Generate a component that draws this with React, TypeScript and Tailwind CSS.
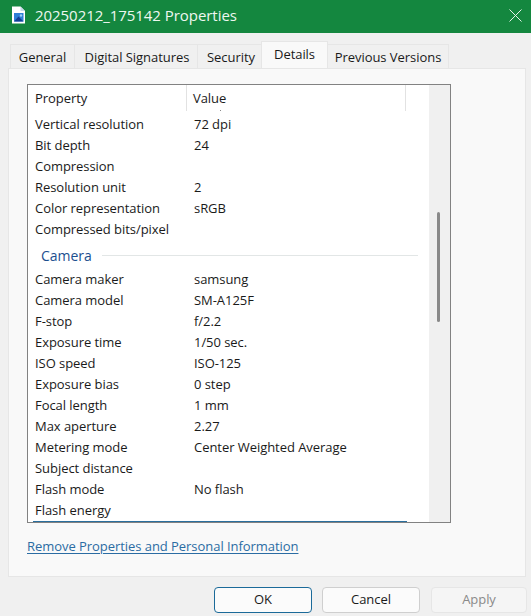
import React from 'react';

const imageRows = [
  { label: 'Vertical resolution', value: '72 dpi' },
  { label: 'Bit depth', value: '24' },
  { label: 'Compression', value: '' },
  { label: 'Resolution unit', value: '2' },
  { label: 'Color representation', value: 'sRGB' },
  { label: 'Compressed bits/pixel', value: '' },
];

const cameraRows = [
  { label: 'Camera maker', value: 'samsung' },
  { label: 'Camera model', value: 'SM-A125F' },
  { label: 'F-stop', value: 'f/2.2' },
  { label: 'Exposure time', value: '1/50 sec.' },
  { label: 'ISO speed', value: 'ISO-125' },
  { label: 'Exposure bias', value: '0 step' },
  { label: 'Focal length', value: '1 mm' },
  { label: 'Max aperture', value: '2.27' },
  { label: 'Metering mode', value: 'Center Weighted Average' },
  { label: 'Subject distance', value: '' },
  { label: 'Flash mode', value: 'No flash' },
  { label: 'Flash energy', value: '' },
];

const Row = ({ label, value }: { label: string; value: string }) => (
  <div className="flex h-[21px] shrink-0 items-center text-[#1a1a1a]">
    <span className="w-[166px] pl-[7px] whitespace-nowrap">{label}</span>
    <span className="whitespace-nowrap">{value}</span>
  </div>
);

const Tab = ({ label, width, inset = '' }: { label: string; width: string; inset?: string }) => (
  <div className={`${width} ${inset} -ml-px flex h-[24px] items-center justify-center border border-b-0 border-[#e6e6e6] bg-[#f0f0f0] pt-[2px] text-[#1a1a1a] whitespace-nowrap`}>
    {label}
  </div>
);

const FileIcon = () => (
  <svg width="15" height="18" viewBox="0 0 15 18">
    <path d="M1 0.5H9.5L14 5V17.5H1Z" fill="#ffffff" />
    <path d="M9.5 0.5V5H14Z" fill="#c8d8ea" />
    <rect x="3" y="7" width="9.5" height="8.5" fill="#2f7fd6" />
    <path d="M3 15.5L7.5 10.5L12.5 15.5Z" fill="#123f94" />
    <circle cx="10" cy="9.5" r="1.2" fill="#9fd0f5" />
  </svg>
);

export default function App() {
  return (
    <div className="flex h-[616px] w-[531px] flex-col overflow-hidden bg-[#f0f0f0] font-['Open_Sans','Noto_Sans',sans-serif] text-[13px] tracking-[-0.05px]">
      {/* Title bar */}
      <div className="flex h-[33px] shrink-0 items-center justify-between bg-[#14873f] pb-[3px] pl-[11px] pr-[9px] text-white">
        <div className="flex items-center gap-[9px]">
          <FileIcon />
          <span className="text-[15px] text-[#eef7f0]">20250212_175142 Properties</span>
        </div>
        <svg width="13" height="13" viewBox="0 0 13 13" stroke="#e4f2e8" strokeWidth="1">
          <path d="M0.5 0.5L12.5 12.5M12.5 0.5L0.5 12.5" />
        </svg>
      </div>

      {/* Tabs */}
      <div className="flex h-[35px] shrink-0 items-end pl-[11px]">
        <Tab label="General" width="w-[65px]" />
        <Tab label="Digital Signatures" width="w-[124px]" inset="pl-[2px]" />
        <Tab label="Security" width="w-[65px]" inset="pl-[3px]" />
        <div className="relative z-10 -ml-px flex h-[27px] w-[67px] items-start justify-center border border-b-0 border-[#e6e6e6] bg-[#f9f9f9] pt-[3px] text-[#1a1a1a]">
          Details
        </div>
        <Tab label="Previous Versions" width="w-[122px]" />
      </div>

      {/* Page */}
      <div className="ml-[8px] mr-[5px] flex h-[509px] shrink-0 flex-col border border-[#e6e6e6] bg-[#f9f9f9] pl-[18px] pr-[74px] pt-[15px]">
        <div className="flex h-[439px] shrink-0 border border-[#828282] bg-white">
          <div className="flex w-[401px] flex-col overflow-hidden">
            <div className="flex h-[25px] shrink-0 items-center text-[#1a1a1a]">
              <span className="w-[159px] border-r border-[#e2e2e2] pl-[7px] leading-[26px]">Property</span>
              <span className="w-[219px] border-r border-[#e2e2e2] pl-[6px] leading-[26px]">Value</span>
            </div>
            <div className="h-[4px] shrink-0">
              <div className="ml-[192px] h-px w-px bg-[#888888]" />
            </div>
            {imageRows.map((row) => (
              <Row key={row.label} label={row.label} value={row.value} />
            ))}
            <div className="mt-[2px] flex h-[26px] shrink-0 items-center gap-[10px] pl-[13px]">
              <span className="text-[14px] text-[#1c4f8f]">Camera</span>
              <div className="mr-[11px] h-px flex-1 bg-[#e2e6e6]" />
            </div>
            <div className="h-px shrink-0" />
            {cameraRows.map((row) => (
              <Row key={row.label} label={row.label} value={row.value} />
            ))}
            <div className="ml-[5px] mr-[22px] h-px shrink-0 bg-[#2a6f9e]" />
          </div>
          {/* Scrollbar */}
          <div className="flex flex-1 justify-center bg-[#f0f0f0] pr-[2px] pt-[127px]">
            <div className="h-[110px] w-[3px] rounded-full bg-[#8a8a8a]" />
          </div>
        </div>
        <div className="mt-[14px] text-[#2b6ca3] underline underline-offset-2 whitespace-nowrap">
          Remove Properties and Personal Information
        </div>
      </div>

      {/* Buttons */}
      <div className="flex flex-1 items-start gap-[10px] pl-[214px] pt-[10px]">
        <button className="h-[26px] w-[98px] rounded-[4px] border border-[#1b6a99] bg-[#fbfbfb] text-[#1a1a1a]">OK</button>
        <button className="h-[26px] w-[98px] rounded-[4px] border border-[#cfcfcf] bg-[#fbfbfb] text-[#1a1a1a]">Cancel</button>
        <button className="ml-px h-[26px] w-[96px] rounded-[4px] border border-[#e6e6e6] bg-[#f5f5f5] text-[#8a8a8a]">Apply</button>
      </div>
    </div>
  );
}
